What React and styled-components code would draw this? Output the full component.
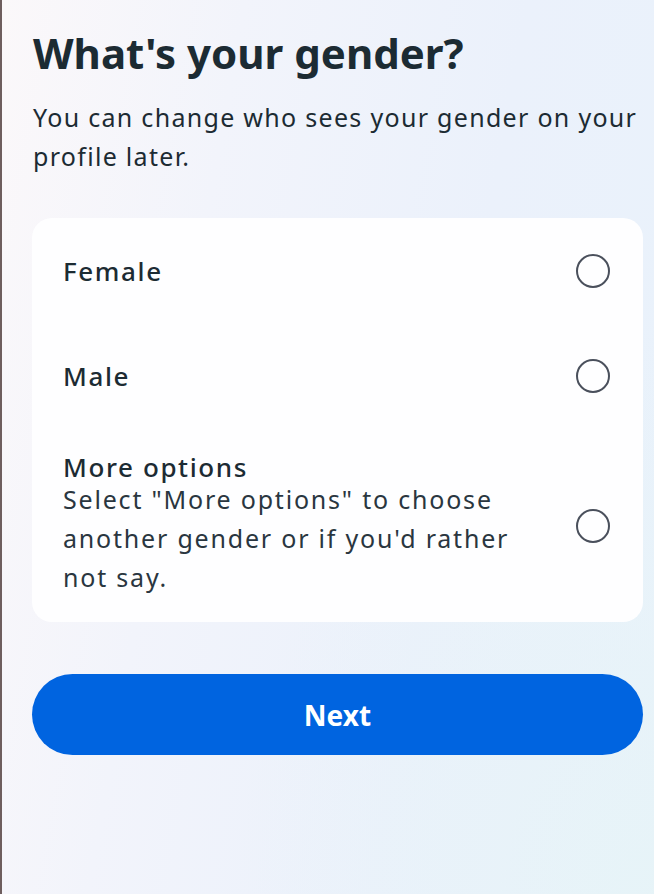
import React from "react";
import styled, { createGlobalStyle } from "styled-components";

const GlobalStyle = createGlobalStyle`
  html, body {
    margin: 0;
    padding: 0;
  }
  body {
    font-family: "Noto Sans", "Liberation Sans", sans-serif;
    color: #1c2b33;
  }
`;

const Page = styled.div`
  min-height: 894px;
  box-sizing: border-box;
  border-left: 2px solid #6e5e5e;
  background:
    radial-gradient(ellipse at 100% 100%, rgba(230, 244, 247, 0.8) 0%, rgba(230, 244, 247, 0) 45%),
    linear-gradient(100deg, #fbf8fa 0%, #f2f4fb 30%, #ebf1fb 65%, #e9f2fb 100%);
  padding: 27px 11px 0 30px;
`;

const Title = styled.h1`
  margin: 0 0 0 1px;
  font-size: 42px;
  line-height: 52px;
  font-weight: 700;
  color: #1c2b33;
`;

const Subtitle = styled.p`
  margin: 19px 0 0 1px;
  font-size: 25px;
  line-height: 39px;
  letter-spacing: 1.3px;
  font-weight: 400;
  color: #1c2b33;
`;

const Card = styled.div`
  margin-top: 42px;
  background: #fefeff;
  border-radius: 20px;
  padding: 0 0 25px;
`;

const Option = styled.label`
  display: flex;
  align-items: center;
  justify-content: space-between;
  gap: 24px;
  box-sizing: border-box;
  height: ${(p) => (p.$tall ? "auto" : "105px")};
  padding: ${(p) => (p.$tall ? "26px 33px 0 31px" : "0 33px 0 31px")};
  cursor: pointer;
`;

const OptionText = styled.div`
  display: flex;
  flex-direction: column;
`;

const OptionLabel = styled.span`
  font-size: 26px;
  line-height: ${(p) => (p.$compact ? "26px" : "36px")};
  font-weight: 500;
  letter-spacing: 1.6px;
  color: #1c2b33;
`;

const OptionHint = styled.span`
  font-size: 25px;
  line-height: 39px;
  letter-spacing: 1.8px;
  color: #2a3640;
  max-width: 450px;
`;

const Radio = styled.span`
  flex: none;
  width: 30px;
  height: 30px;
  border: 2.5px solid #4a505c;
  border-radius: 50%;
`;

const NextButton = styled.button`
  display: block;
  width: 100%;
  height: 81px;
  margin-top: 52px;
  border: none;
  border-radius: 41px;
  background: #0064e0;
  color: #ffffff;
  font-family: inherit;
  font-size: 28px;
  font-weight: 700;
  cursor: pointer;
`;

const options = [
  { label: "Female" },
  { label: "Male" },
  {
    label: "More options",
    hint: 'Select "More options" to choose another gender or if you\'d rather not say.',
  },
];

export default function App() {
  return (
    <Page>
      <GlobalStyle />
      <Title>What's your gender?</Title>
      <Subtitle>You can change who sees your gender on your profile later.</Subtitle>
      <Card>
        {options.map((o) => (
          <Option key={o.label} $tall={!!o.hint}>
            <OptionText>
              <OptionLabel $compact={!!o.hint}>{o.label}</OptionLabel>
              {o.hint && <OptionHint>{o.hint}</OptionHint>}
            </OptionText>
            <Radio />
          </Option>
        ))}
      </Card>
      <NextButton>Next</NextButton>
    </Page>
  );
}
